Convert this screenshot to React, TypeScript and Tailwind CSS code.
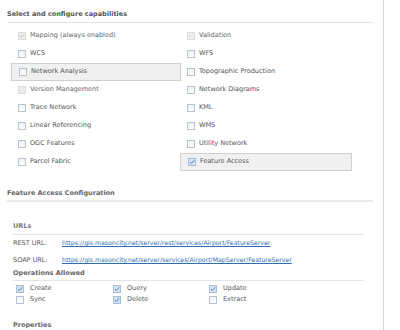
import React from 'react';

type Cap = { label: string; state: 'off' | 'on' | 'disabled' | 'disabledOn'; active?: boolean };

const left: Cap[] = [
    { label: 'Mapping (always enabled)', state: 'disabledOn' },
    { label: 'WCS', state: 'off' },
    { label: 'Network Analysis', state: 'off', active: true },
    { label: 'Version Management', state: 'disabled' },
    { label: 'Trace Network', state: 'off' },
    { label: 'Linear Referencing', state: 'off' },
    { label: 'OGC Features', state: 'off' },
    { label: 'Parcel Fabric', state: 'off' },
];

const right: Cap[] = [
    { label: 'Validation', state: 'disabled' },
    { label: 'WFS', state: 'off' },
    { label: 'Topographic Production', state: 'off' },
    { label: 'Network Diagrams', state: 'off' },
    { label: 'KML', state: 'off' },
    { label: 'WMS', state: 'off' },
    { label: 'Utility Network', state: 'off' },
    { label: 'Feature Access', state: 'on', active: true },
];

function Box({ state }: { state: Cap['state'] }) {
    const disabled = state === 'disabled' || state === 'disabledOn';
    const checked = state === 'on' || state === 'disabledOn';
    return <span className={
        'relative inline-flex h-[8px] w-[8px] shrink-0 items-center justify-center border ' +
        (disabled ? 'border-[#dcdcdc] bg-[#ececec]' : checked ? 'border-[#a9bdd3] bg-[#d4e3f2]' : 'border-[#b9c3cf] bg-gradient-to-b from-[#eef2f7] to-white')
    }>
        {checked && <svg viewBox="0 0 8 8" className="h-[6px] w-[6px]">
            <path d="M1.3 4.2 L3.2 6 L6.8 1.8" fill="none" stroke={disabled ? '#c4c4c4' : '#3f7bc1'} strokeWidth="1.3" />
        </svg>}
    </span>;
}

function CapRow({ cap }: { cap: Cap }) {
    return <div className={
        'flex h-[18px] items-center gap-[4px] pl-[7px] ' +
        (cap.active ? 'border border-[#cfcfcf] bg-[#f0f0f0] pl-[6px]' : '')
    }>
        <Box state={cap.state} />
        <span className={cap.state === 'disabled' || cap.state === 'disabledOn' ? 'text-[#666]' : 'text-[#555]'}>{cap.label}</span>
    </div>;
}

function Op({ label, on }: { label: string; on?: boolean }) {
    return <div className="flex h-[11px] items-center gap-[6px] pl-[3px]">
        <Box state={on ? 'on' : 'off'} />
        <span>{label}</span>
    </div>;
}

export default function App() {
    return <div className="flex h-[330px] w-[400px] overflow-hidden bg-white text-[6.5px] leading-none text-[#555]" style={{ fontFamily: '"DejaVu Sans", Verdana, sans-serif' }}>
        <div className="w-[384px] shrink-0 border-r border-[#d6d6d6] pl-[7px] pr-[10px] pt-[11px]">
            <div className="border-b border-[#e4e4e4] pb-[4px] font-bold text-[#555]">Select and configure capabilities</div>
            <div className="mt-[4px] grid grid-cols-[170px_171px] pl-[4px]">
                <div className="flex flex-col">
                    {left.map(c => <CapRow key={c.label} cap={c} />)}
                </div>
                <div className="-ml-[1px] flex flex-col">
                    {right.map(c => <CapRow key={c.label} cap={c} />)}
                </div>
            </div>

            <div className="mt-[19px] border-b-2 border-[#e8e8e8] pb-[4px] font-bold text-[#666]">Feature Access Configuration</div>

            <div className="ml-[6px] mr-[9px] mt-[21px]">
                <div className="border-b border-[#e4e4e4] pb-[4px] font-bold text-[#777]">URLs</div>
                <div className="mt-[4px] flex h-[9px] items-center">
                    <span className="w-[49px]">REST URL:</span>
                    <span className="text-[6.2px] text-[#2d6db5] underline">https://gis.masoncity.net/server/rest/services/Airport/FeatureServer</span>
                </div>
                <div className="mt-[8px] flex h-[9px] items-center">
                    <span className="w-[49px]">SOAP URL:</span>
                    <span className="text-[6.2px] text-[#2d6db5] underline">https://gis.masoncity.net/server/services/Airport/MapServer/FeatureServer</span>
                </div>

                <div className="mt-[5px] border-b border-[#e4e4e4] pb-[4px] font-bold text-[#666]">Operations Allowed</div>
                <div className="mt-[2px] grid grid-cols-[97px_96px_96px]">
                    <Op label="Create" on />
                    <Op label="Query" on />
                    <Op label="Update" on />
                    <Op label="Sync" />
                    <Op label="Delete" on />
                    <Op label="Extract" />
                </div>

                <div className="mt-[17px] font-bold text-[#666]">Properties</div>
            </div>
        </div>
    </div>;
}
